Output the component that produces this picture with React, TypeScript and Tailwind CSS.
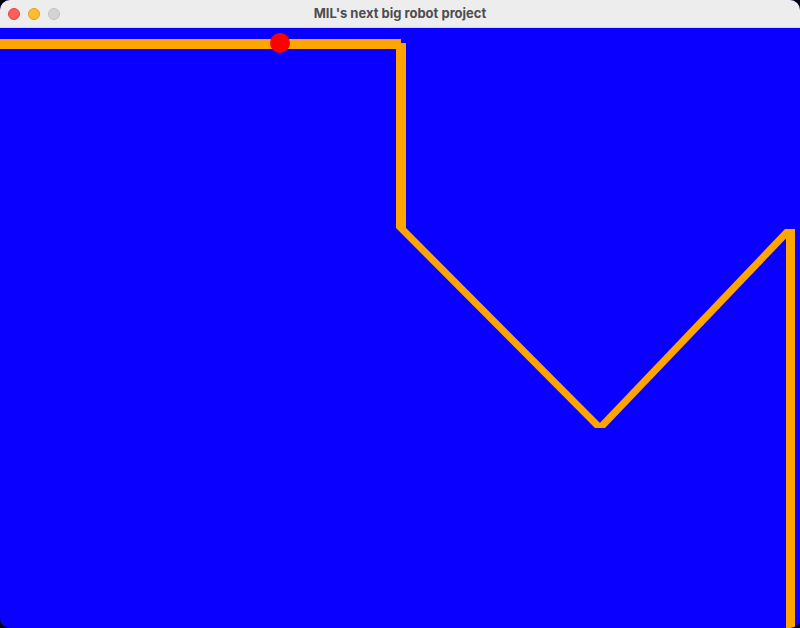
import React from "react";

export default function App() {
  return (
    <div className="w-[800px] h-[628px] bg-black overflow-hidden">
      <div className="w-full h-full rounded-[10px] overflow-hidden flex flex-col bg-[#0a00ff]">
        <div className="h-[28px] shrink-0 bg-[#ededed] border-b border-[#d6d6d6] relative flex items-center justify-center">
          <div className="absolute left-[8px] top-[8px] flex gap-[8px]">
            <div className="w-[12px] h-[12px] rounded-full bg-[#ff5f57] border border-[#e0443e]" />
            <div className="w-[12px] h-[12px] rounded-full bg-[#febc2e] border border-[#dea123]" />
            <div className="w-[12px] h-[12px] rounded-full bg-[#d3d3d3] border border-[#c2c2c2]" />
          </div>
          <span
            className="text-[13px] font-bold text-[#4d4d4d] leading-none"
            style={{ fontFamily: "Inter, 'Liberation Sans', sans-serif" }}
          >
            MIL's next big robot project
          </span>
        </div>
        <div className="flex-1 bg-[#0a00ff]">
          <svg width="800" height="600" viewBox="0 0 800 600" className="block">
            <g fill="#ffa500">
              <rect x="0" y="11" width="401" height="10" />
              <rect x="396" y="15" width="10" height="185" />
              <polygon points="396,200 406,200 605,400 595,400" />
              <polygon points="595,400 605,400 795,201 785,201" />
              <rect x="786" y="201" width="9" height="399" />
            </g>
            <circle cx="280" cy="15" r="10" fill="#ff0000" />
          </svg>
        </div>
      </div>
    </div>
  );
}
